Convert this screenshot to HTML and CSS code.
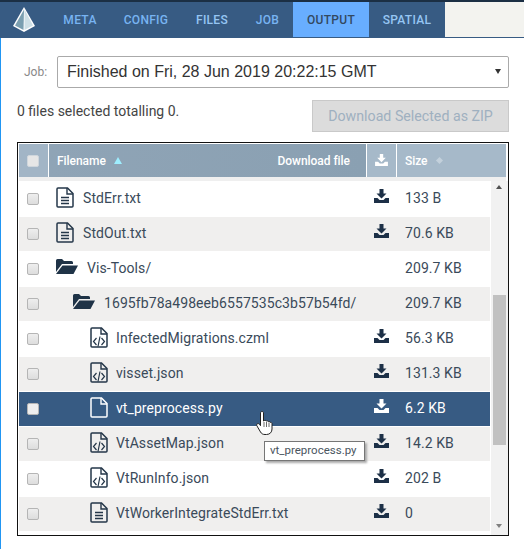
FILE: index.html
```html
<!DOCTYPE html>
<html lang="en">
<head>
<meta charset="utf-8">
<title>Output</title>
<link rel="stylesheet" href="styles.css">
</head>
<body>
<svg class="defs" width="0" height="0" aria-hidden="true">
  <defs>
    <symbol id="dl" viewBox="0 0 15 14">
      <path d="M5.500 0h4v4.500h3L7.500 9.500l-5-5h3z"/>
      <path d="M0 9h3.500l2 2h4l2-2H15v5H0z"/>
    </symbol>
    <symbol id="doc" viewBox="0 0 18 21">
      <path d="M1 2a1 1 0 0 1 1-1h9.500L17 6.500V19a1 1 0 0 1-1 1H2a1 1 0 0 1-1-1z" fill="none" stroke="currentColor" stroke-width="1.500"/>
      <path d="M11 1v6h6" fill="none" stroke="currentColor" stroke-width="1.400"/>
      <path d="M5 10.500h8M5 13.500h8M5 16.500h8" fill="none" stroke="currentColor" stroke-width="1.300"/>
    </symbol>
    <symbol id="code" viewBox="0 0 18 21">
      <path d="M1 2a1 1 0 0 1 1-1h9.500L17 6.500V19a1 1 0 0 1-1 1H2a1 1 0 0 1-1-1z" fill="none" stroke="currentColor" stroke-width="1.500"/>
      <path d="M11 1v6h6" fill="none" stroke="currentColor" stroke-width="1.400"/>
      <path d="M6.500 11l-3 3.500 3 3.500M11.500 11l3 3.500-3 3.500M10 9.500l-2 10" fill="none" stroke="currentColor" stroke-width="1.200"/>
    </symbol>
    <symbol id="blank" viewBox="0 0 18 21">
      <path d="M1 2a1 1 0 0 1 1-1h9.500L17 6.500V19a1 1 0 0 1-1 1H2a1 1 0 0 1-1-1z" fill="none" stroke="currentColor" stroke-width="1.500"/>
      <path d="M11 1v6h6" fill="none" stroke="currentColor" stroke-width="1.400"/>
    </symbol>
    <symbol id="folder" viewBox="0 0 22 15">
      <path d="M0 1.500A1.500 1.500 0 0 1 1.500 0H6l2 2h7.500A1.500 1.500 0 0 1 17 3.500V5H6L1 11.500 0 13z"/>
      <path d="M6.500 6.500H22L17.500 15H0z"/>
    </symbol>
  </defs>
</svg>
<div class="page">
  <header class="topbar">
    <div class="logo">
      <svg width="24" height="27" viewBox="0 0 24 27">
        <path d="M12 1L1 20l11 6 11-6z" fill="#fff"/>
        <path d="M12 3.500L3 19.500l8.500 4.500z" fill="#7b9fb0"/>
        <path d="M12.500 3.500l8.500 16-8.500 4.500z" fill="#cfe0e6"/>
      </svg>
    </div>
    <nav class="tabs">
      <a class="tab tab-meta">META</a>
      <a class="tab tab-config">CONFIG</a>
      <a class="tab tab-files">FILES</a>
      <a class="tab tab-job">JOB</a>
      <a class="tab tab-output active">OUTPUT</a>
      <a class="tab tab-spatial">SPATIAL</a>
    </nav>
    <div class="topfill"></div>
  </header>
  <main class="content">
    <div class="jobrow">
      <label class="joblabel">Job:</label>
      <div class="select">Finished on Fri, 28 Jun 2019 20:22:15 GMT<span class="caret"></span></div>
    </div>
    <div class="selrow">
      <span class="seltext">0 files selected totalling 0.</span>
      <button class="zip">Download Selected as ZIP</button>
    </div>
    <section class="table">
      <div class="thead">
        <div class="th th-check"><span class="cb cb-head"></span></div>
        <div class="th th-name"><span class="fn">Filename</span><span class="sort-up"></span><span class="dlfile">Download file</span></div>
        <div class="th th-dl"><svg class="ic-dl"><use href="#dl"/></svg></div>
        <div class="th th-size"><span>Size</span><span class="sort-none"></span></div>
      </div>
      <div class="gap"></div>
      <div class="tbody">
        <div class="rows">
          <div class="row"><span class="cell-check"><span class="cb"></span></span><span class="cell-name"><svg class="ic-file"><use href="#doc"/></svg><span>StdErr.txt</span></span><span class="cell-dl"><svg class="ic-dl"><use href="#dl"/></svg></span><span class="cell-size">133 B</span></div>
          <div class="row alt"><span class="cell-check"><span class="cb"></span></span><span class="cell-name"><svg class="ic-file"><use href="#doc"/></svg><span>StdOut.txt</span></span><span class="cell-dl"><svg class="ic-dl"><use href="#dl"/></svg></span><span class="cell-size">70.6 KB</span></div>
          <div class="row"><span class="cell-check"><span class="cb"></span></span><span class="cell-name"><svg class="ic-folder"><use href="#folder"/></svg><span>Vis-Tools/</span></span><span class="cell-dl"></span><span class="cell-size">209.7 KB</span></div>
          <div class="row alt"><span class="cell-check"><span class="cb"></span></span><span class="cell-name lvl1"><svg class="ic-folder"><use href="#folder"/></svg><span>1695fb78a498eeb6557535c3b57b54fd/</span></span><span class="cell-dl"></span><span class="cell-size">209.7 KB</span></div>
          <div class="row"><span class="cell-check"><span class="cb"></span></span><span class="cell-name lvl2"><svg class="ic-file"><use href="#code"/></svg><span>InfectedMigrations.czml</span></span><span class="cell-dl"><svg class="ic-dl"><use href="#dl"/></svg></span><span class="cell-size">56.3 KB</span></div>
          <div class="row alt"><span class="cell-check"><span class="cb"></span></span><span class="cell-name lvl2"><svg class="ic-file"><use href="#code"/></svg><span>visset.json</span></span><span class="cell-dl"><svg class="ic-dl"><use href="#dl"/></svg></span><span class="cell-size">131.3 KB</span></div>
          <div class="row selected"><span class="cell-check"><span class="cb"></span></span><span class="cell-name lvl2"><svg class="ic-file"><use href="#blank"/></svg><span>vt_preprocess.py</span></span><span class="cell-dl"><svg class="ic-dl"><use href="#dl"/></svg></span><span class="cell-size">6.2 KB</span></div>
          <div class="row alt"><span class="cell-check"><span class="cb"></span></span><span class="cell-name lvl2"><svg class="ic-file"><use href="#code"/></svg><span>VtAssetMap.json</span></span><span class="cell-dl"><svg class="ic-dl"><use href="#dl"/></svg></span><span class="cell-size">14.2 KB</span></div>
          <div class="row"><span class="cell-check"><span class="cb"></span></span><span class="cell-name lvl2"><svg class="ic-file"><use href="#code"/></svg><span>VtRunInfo.json</span></span><span class="cell-dl"><svg class="ic-dl"><use href="#dl"/></svg></span><span class="cell-size">202 B</span></div>
          <div class="row alt"><span class="cell-check"><span class="cb"></span></span><span class="cell-name lvl2"><svg class="ic-file"><use href="#doc"/></svg><span>VtWorkerIntegrateStdErr.txt</span></span><span class="cell-dl"><svg class="ic-dl"><use href="#dl"/></svg></span><span class="cell-size">0</span></div>
        </div>
        <div class="scrollbar">
          <span class="arrow-up"></span>
          <span class="thumb"></span>
          <span class="arrow-down"></span>
        </div>
      </div>
    </section>
  </main>
  <svg class="cursor" width="20" height="26" viewBox="0 0 20 26">
    <path d="M6 1.500c1 0 1.500.7 1.500 1.500v8l1-.5c.8-.3 1.500 0 1.800.6.700-.5 1.700-.3 2 .5.800-.4 1.700 0 2 .8.800-.2 1.700.3 1.700 1.300V19c0 3-2 5.500-5.500 5.500h-1.500c-2.500 0-3.500-1-4.500-2.500L1 16c-.7-1-.3-2 .5-2.300.8-.3 1.500 0 2 .7l1 1.300V3c0-.8.600-1.500 1.500-1.500z" fill="#fff" stroke="#222" stroke-width="1"/>
    <path d="M8 12v5M10.500 12v5M13 12.500V17" stroke="#444" stroke-width=".8" fill="none"/>
  </svg>
  <div class="tooltip">vt_preprocess.py</div>
</div>
</body>
</html>
```
FILE: styles.css
```css
* { box-sizing: border-box; }
html, body { margin: 0; padding: 0; background: #fff; }
body { width: 524px; height: 549px; overflow: hidden; font-family: Roboto, "Liberation Sans", sans-serif; }
.defs { position: absolute; }
.page { position: relative; width: 524px; height: 549px; border-left: 1px solid #2196f3; }
.topbar { display: flex; height: 38px; margin-left: -1px; background: #375b83; border-top: 2px solid #1b2f44; border-bottom: 1px solid #375b83; }
.logo { width: 49px; display: flex; align-items: center; justify-content: center; padding-right: 2px; }
.tabs { display: flex; height: 35px; }
.tab { display: flex; align-items: center; justify-content: center; font-size: 12px; font-weight: 500; letter-spacing: .3px; color: #78b4f2; }
.tab-meta { width: 61px; padding-left: 1px; }
.tab-config { width: 72px; }
.tab-files { width: 60px; color: #96c6f3; }
.tab-job { width: 51px; }
.tab-output { width: 76px; }
.tab-spatial { width: 76px; color: #96c6f3; }
.tab.active { background: #68aeff; color: #33495f; }
.topfill { flex: 1; background: #f3f3ef; }
.content { padding: 0 15px 0 16px; }
.jobrow { display: flex; align-items: center; margin-top: 18px; height: 32px; }
.joblabel { width: 40px; padding-left: 7px; font-size: 12px; color: #888; }
.select { position: relative; width: 452px; height: 32px; border: 1px solid #aaa; border-radius: 2px; background: #fff; padding-left: 9px; font: 16px/30px "Liberation Sans", Arial, sans-serif; color: #333; }
.caret { position: absolute; right: 7px; top: 12px; border-left: 3px solid transparent; border-right: 3px solid transparent; border-top: 5px solid #333; }
.selrow { display: flex; justify-content: space-between; align-items: flex-start; height: 42px; margin-top: 12px; }
.seltext { margin-top: 3px; font-size: 14px; color: #444; }
.zip { width: 197px; height: 32px; border: 1px solid #c9c9c9; background: #dcdcdc; color: #9fb0c0; font: 14.200px Roboto, sans-serif; padding: 0; }
.table { width: 492px; height: 394px; border: 1px solid #111; padding: 1px 0 0 1px; background: #fff; }
.thead { display: flex; height: 33px; margin-right: 2px; }
.th { display: flex; align-items: center; color: #fff; font-size: 12px; font-weight: 500; letter-spacing: -.05px; border-right: 1px solid #fff; }
.th-check { width: 30px; background: #a2b5c6; padding-left: 8px; }
.th-name { width: 318px; padding-left: 8px; background: linear-gradient(90deg, #8fa4b6, #8aa0b2); }
.th-dl { width: 30px; justify-content: center; background: #a6b9c9; }
.th-size { flex: 1; padding-left: 8px; border-right: 0; background: #a6b9c9; }
.sort-up { margin-left: 8px; border-left: 4.500px solid transparent; border-right: 4.500px solid transparent; border-bottom: 7px solid #9eeeff; }
.sort-none { margin-left: 9px; width: 5px; height: 5px; background: #c3d0db; transform: rotate(45deg); }
.dlfile { margin-left: auto; padding-right: 16px; }
.gap { height: 4px; margin-right: 2px; background: #efefef; }
.tbody { display: flex; height: 354px; overflow: hidden; }
.rows { width: 471px; padding-top: 1px; }
.row { display: flex; align-items: center; height: 35px; font-size: 14px; letter-spacing: .08px; color: #3a4a5a; border-bottom: 1px solid #fff; background-clip: padding-box; }
.row.alt { background-color: #f0efee; }
.row.selected { background-color: #375b83; color: #fff; }
.cell-check { width: 28px; padding-left: 8px; display: flex; flex: none; }
.cell-name { width: 319px; display: flex; align-items: center; gap: 9px; padding-left: 9px; color: #3a4a5a; flex: none; }
.cell-name span { margin-bottom: 2px; }
.selected .cell-name { color: #fff; }
.lvl1 { padding-left: 26px; }
.lvl2 { padding-left: 43px; gap: 8px; }
.cell-dl { width: 30px; display: flex; justify-content: center; flex: none; }
.cell-size { padding-left: 9px; padding-bottom: 2px; font-size: 14px; }
.cb { display: block; width: 12px; height: 12px; border: 1px solid #b5b5b5; border-radius: 2px; background: linear-gradient(#eee, #ddd); }
.cb-head { border-color: #cfd6dc; background: #e6e6e6; }
.selected .cb { background: #eee; }
.ic-dl { width: 15px; height: 14px; fill: #1d3047; margin-bottom: 7px; }
.th .ic-dl { width: 13px; height: 12px; fill: #fff; margin: 0 0 2px; }
.selected .ic-dl { fill: #fff; }
.ic-file { width: 18px; height: 21px; color: #253749; flex: none; margin-bottom: 3px; }
.selected .ic-file { color: #fff; }
.ic-folder { width: 22px; height: 15px; fill: #1f3347; flex: none; margin-bottom: 5px; }
.scrollbar { flex: 1; position: relative; margin-left: 1px; background: #f1f1f1; }
.arrow-up, .arrow-down { position: absolute; left: 5px; border-left: 3.500px solid transparent; border-right: 3.500px solid transparent; }
.arrow-up { top: 4px; border-bottom: 4px solid #505050; }
.arrow-down { bottom: 7px; border-top: 4px solid #808080; }
.thumb { position: absolute; left: 2px; right: 2px; top: 114px; height: 150px; background: #c1c1c1; }
.cursor { position: absolute; left: 255px; top: 410px; }
.tooltip { position: absolute; left: 263px; top: 441px; width: 101px; height: 20px; border: 1px solid #767676; background: #fff; box-shadow: 2px 2px 2px #aaa; font-size: 11.500px; line-height: 17px; padding-left: 5px; color: #4a5560; white-space: nowrap; }
```
